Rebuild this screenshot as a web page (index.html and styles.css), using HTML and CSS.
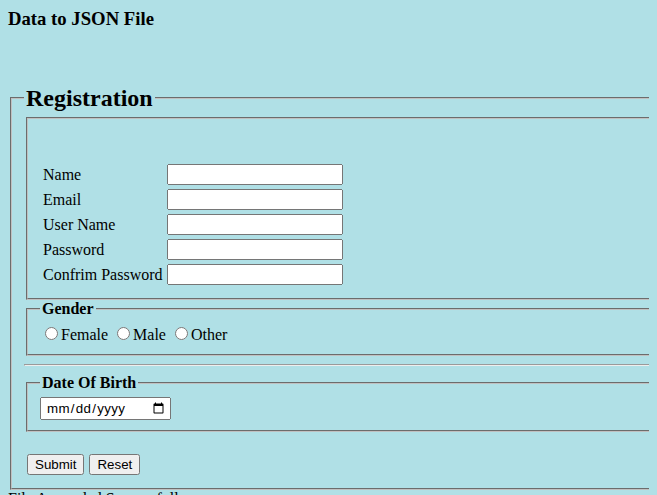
FILE: index.html
```html
<!DOCTYPE html>
<html lang="en">
<head>
<meta charset="utf-8">
<title>Data to JSON File</title>
<link rel="stylesheet" href="styles.css">
</head>
<body>
<h3 class="page-title">Data to JSON File</h3>
<form class="reg-form">
  <fieldset class="outer">
    <legend class="main-legend">Registration</legend>
    <fieldset class="details">
      <table class="fields">
        <tr><td class="label">Name</td><td><input class="text-input" type="text"></td></tr>
        <tr><td class="label">Email</td><td><input class="text-input" type="email"></td></tr>
        <tr><td class="label">User Name</td><td><input class="text-input" type="text"></td></tr>
        <tr><td class="label">Password</td><td><input class="text-input" type="password"></td></tr>
        <tr><td class="label">Confrim Password</td><td><input class="text-input" type="password"></td></tr>
      </table>
    </fieldset>
    <fieldset class="group">
      <legend class="group-legend">Gender</legend>
      <input type="radio" name="gender">Female <input type="radio" name="gender">Male <input type="radio" name="gender">Other
    </fieldset>
    <hr class="divider">
    <fieldset class="group dob">
      <legend class="group-legend">Date Of Birth</legend>
      <input class="date-input" type="date">
    </fieldset>
    <div class="actions">
      <input class="btn" type="submit" value="Submit">
      <input class="btn" type="reset" value="Reset">
    </div>
  </fieldset>
</form>
<div class="status">File Appended Successfully</div>
</body>
</html>
```
FILE: styles.css
```css
html {
  overflow: hidden;
}
body {
  margin: 8px;
  background: #b0e0e6;
  font-family: "Liberation Serif", "Times New Roman", serif;
  font-size: 16px;
  color: #000;
}
.page-title {
  margin: 0 0 54.5px;
  font-size: 18.72px;
  font-weight: bold;
}
.reg-form {
  margin: 0;
}
fieldset {
  border: 2px groove rgb(192, 192, 192);
}
.outer {
  width: 680px;
  margin: 0 2px;
}
.main-legend {
  font-size: 24px;
  font-weight: bold;
}
.details {
  margin: 0 2px;
}
.fields {
  margin-top: 36.4px;
  border-spacing: 2px;
}
.fields td {
  padding: 1px;
}
.text-input {
  width: 168px;
  font-family: "Liberation Sans", Arial, sans-serif;
  font-size: 13.33px;
}
.group {
  margin: 0 2px;
}
.group-legend {
  font-weight: bold;
}
.divider {
  margin: 8px 0;
}
.dob {
  margin-top: 2px;
}
.date-input {
  box-sizing: border-box;
  width: 131px;
  height: 23px;
  padding: 1px 2px 1px 4px;
  font-family: "Liberation Sans", Arial, sans-serif;
  font-size: 13.33px;
  letter-spacing: 0.3px;
}
.actions {
  display: flex;
  gap: 5px;
  margin-top: 22px;
  padding-left: 3px;
  padding-bottom: 3px;
}
.btn {
  margin: 0;
  height: 21px;
  padding: 1px 6px;
  font-family: "Liberation Sans", Arial, sans-serif;
  font-size: 13.33px;
}
.status {
  margin: 0;
}
```
